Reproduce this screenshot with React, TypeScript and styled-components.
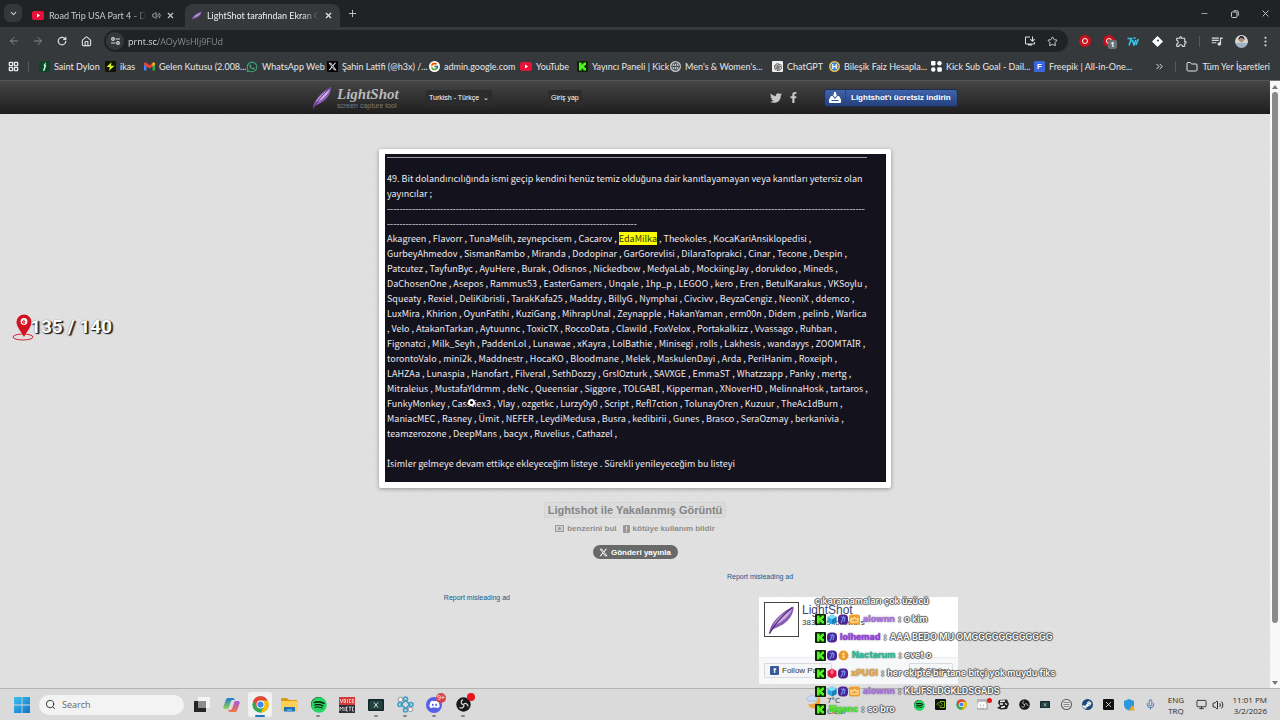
import React from "react";
import styled, { createGlobalStyle, css } from "styled-components";
import { FaDiscord, FaFacebookF, FaSpotify, FaSteamSymbol, FaTwitter, FaWhatsapp } from "react-icons/fa";
import { FaXTwitter } from "react-icons/fa6";
import { FcGoogle } from "react-icons/fc";
import { AiOutlineOpenAI } from "react-icons/ai";
import { MdOutlineExtension, MdOutlineInstallDesktop, MdQueueMusic } from "react-icons/md";
import {
  AlignJustify, ArrowLeft, ArrowRight, ChevronDown, ChevronsRight, Folder, Globe, House, LayoutGrid,
  Mic, Minus, Monitor, MoreVertical, Plus, RotateCw, Search, Share2, Star, Volume2, X,
} from "lucide-react";

const ui = `"Open Sans", "Noto Sans", sans-serif`;
const chrome = `Lato, "Noto Sans", sans-serif`;
const arial = `"Liberation Sans", Arial, sans-serif`;

const GlobalStyle = createGlobalStyle`
  * { box-sizing: border-box; }
  body { margin: 0; font-family: ${ui}; font-size: 8px; background: #e1e1e1; }
  button, input { font: inherit; color: inherit; border: 0; padding: 0; background: none; outline: none; }
  a { color: inherit; text-decoration: none; }
  p, h1 { margin: 0; }
  svg { display: block; flex: none; }
`;

const Desktop = styled.div`
  position: relative;
  display: flex;
  flex-direction: column;
  min-height: 100vh;
`;

/* ---------- browser chrome ---------- */

const TabStrip = styled.div`
  display: flex;
  align-items: flex-end;
  height: 27px;
  background: #202224;
  color: #c7cacd;
  font-family: ${chrome};
  font-size: 9px;
`;

const TabSearch = styled.button`
  display: grid;
  place-items: center;
  width: 18px;
  height: 18px;
  margin: 0 4px 5px;
  border-radius: 6px;
  background: #35383a;
`;

const Tab = styled.div<{ $active?: boolean }>`
  display: flex;
  align-items: center;
  gap: 5px;
  width: 159px;
  height: 23px;
  padding: 0 10px 0 6px;
  border-radius: 8px 8px 0 0;
  ${(p) => p.$active && css`
    width: 155px;
    padding-right: 7px;
    background: #36393b;
    color: #eceef0;
  `}
`;

const TabTitle = styled.span`
  flex: 1;
  min-width: 0;
  overflow: hidden;
  white-space: nowrap;
  mask-image: linear-gradient(90deg, #000 85%, transparent);
`;

const IconButton = styled.button<{ $w?: number }>`
  display: grid;
  place-items: center;
  flex: none;
  width: ${(p) => p.$w ?? 24}px;
  height: 100%;
`;

const NewTab = styled(IconButton)`
  height: 27px;
`;

const WindowButtons = styled.div`
  display: flex;
  height: 27px;
  margin-left: auto;
`;

const Toolbar = styled.div`
  display: flex;
  align-items: center;
  height: 28px;
  padding: 0 3px 0 2px;
  background: #36393b;
  color: #d9dcdf;
`;

const Omnibox = styled.div`
  display: flex;
  align-items: center;
  flex: 1;
  height: 22px;
  margin: 0 5px 0 6px;
  padding: 0 5px 0 2px;
  border-radius: 11px;
  background: #202224;
`;

const SiteInfo = styled.button`
  display: grid;
  place-items: center;
  width: 18px;
  height: 18px;
  border-radius: 9px;
  background: #35383a;
`;

const Address = styled.input`
  flex: 1;
  min-width: 0;
  height: 18px;
  margin-left: 4px;
  font-size: 9px;
  color: transparent;
  background: linear-gradient(90deg, #eceef0 30px, #8c9094 30px);
  background-clip: text;
`;

const Divider = styled.span`
  width: 1px;
  height: 11px;
  background: #56595c;
`;

const Avatar = styled.span`
  display: block;
  width: 13px;
  height: 13px;
  border-radius: 7px;
  background: radial-gradient(circle at 50% 40%, #b98b76 0 22%, transparent 24%),
    radial-gradient(circle at 50% 30%, #2c2f3d 0 26%, transparent 28%),
    linear-gradient(#d4d6d4 60%, #9fb2c4 60%);
`;

const BlockerIcon = styled.span<{ $badge?: string }>`
  position: relative;
  display: block;
  width: 12px;
  height: 12px;
  border-radius: 6px;
  background: #c9101c;
  &::before {
    content: "";
    position: absolute;
    inset: 3px;
    border: 1px solid #fff;
    border-radius: 3px;
  }
  ${(p) => p.$badge && css`
    &::after {
      content: "${p.$badge}";
      position: absolute;
      left: 5px;
      top: 5px;
      width: 9px;
      height: 9px;
      border-radius: 2px;
      background: #6d7073;
      color: #fff;
      font: bold 7px/9px ${ui};
      text-align: center;
    }
  `}
`;

const BookmarkBar = styled.nav`
  display: flex;
  align-items: center;
  height: 25px;
  padding: 0 10px 2px 8px;
  background: #36393b;
  color: #e6e8ea;
  font-family: ${chrome};
  font-size: 9px;
`;

const Bookmark = styled.a<{ $w?: number }>`
  display: flex;
  align-items: center;
  gap: 4px;
  flex: 0 0 ${(p) => (p.$w ? `${p.$w}px` : "auto")};
  min-width: 0;
  white-space: nowrap;
`;

const BookmarkTail = styled.div`
  display: flex;
  align-items: center;
  gap: 10px;
  margin-left: auto;
`;

const Tile = styled.span<{ $bg: string; $fg?: string; $round?: boolean; $size?: number }>`
  display: grid;
  place-items: center;
  flex: none;
  width: ${(p) => p.$size ?? 11}px;
  height: ${(p) => p.$size ?? 11}px;
  border-radius: ${(p) => (p.$round ? 50 : 10)}%;
  background: ${(p) => p.$bg};
  color: ${(p) => p.$fg ?? "#fff"};
  font: bold 8px/10px ${arial};
`;

/* ---------- page ---------- */

const Viewport = styled.div`
  display: flex;
  flex: 1;
`;

const Page = styled.div`
  flex: 1;
  min-width: 0;
  font-family: ${arial};
  background-color: #e5e5e5;
  background-image:
    conic-gradient(rgba(0, 0, 0, 0.03) 25%, transparent 0 50%, rgba(0, 0, 0, 0.03) 0 75%, transparent 0),
    repeating-linear-gradient(45deg, rgba(0, 0, 0, 0.02) 0 1px, transparent 1px 3px);
  background-size: 2px 2px, auto;
`;

const SiteHeader = styled.header`
  height: 34px;
  border-top: 1px solid #555;
  background: linear-gradient(#454545, #1e1e1e);
`;

const HeaderInner = styled.div`
  display: flex;
  align-items: center;
  max-width: 646px;
  height: 100%;
  margin: 0 auto;
  color: #fff;
`;

const Logo = styled.a`
  display: flex;
  gap: 5px;
  width: 114px;
`;

const LogoText = styled.span`
  display: flex;
  flex-direction: column;
  color: #b9b9b9;
  font: italic bold 15px/16px "Liberation Serif", serif;
`;

const LogoTag = styled.span`
  color: #7c7c7c;
  font: 7px/8px ${arial};
  white-space: nowrap;
`;

const HeaderButton = styled.button`
  height: 15px;
  padding: 0 3px;
  border-radius: 2px;
  background: #2c2c2c;
  font-size: 7px;
  white-space: nowrap;
`;

const LoginButton = styled(HeaderButton)`
  margin-left: 56px;
`;

const Social = styled.div`
  display: flex;
  align-items: center;
  gap: 6px;
  margin-left: auto;
  color: #c8c8c8;
`;

const Download = styled.a`
  display: flex;
  align-items: center;
  width: 134px;
  height: 18px;
  margin-left: 25px;
  border: 1px solid #1d2c50;
  border-radius: 3px;
  background: linear-gradient(#3f64ac, #25407c);
  font-weight: bold;
  font-size: 8px;
  white-space: nowrap;
`;

const DownloadIcon = styled.span`
  display: grid;
  place-items: center;
  width: 21px;
  height: 100%;
  margin-right: 5px;
  border-right: 1px solid #2c4884;
`;

const Main = styled.main`
  display: flex;
  flex-direction: column;
  align-items: center;
  padding-top: 35px;
`;

const Card = styled.div`
  width: 512px;
  max-width: 100%;
  padding: 5px 5px 6px 6px;
  border-radius: 2px;
  background: #fff;
  box-shadow: 0 1px 4px rgba(0, 0, 0, 0.35);
`;

const Shot = styled.article`
  padding: 3px 19px 11px 2px;
  background: #14121c;
  color: #eceaf0;
  font: 9px/15px "Noto Sans CJK JP", sans-serif;
`;

const Rule = styled.hr`
  height: 1px;
  margin: 0 0 13px;
  border: 0;
  background: #9a99a2;
`;

const Line = styled.p`
  height: 15px;
  white-space: nowrap;
`;

const DottedI = styled.span`
  font-family: "Noto Sans", sans-serif;
`;

const Mark = styled.mark`
  background: #fbff00;
  color: #33330c;
`;

const Title = styled.h1`
  margin-top: 14px;
  padding: 0 3px;
  border: 1px solid #d4d4d4;
  background: rgba(215, 215, 215, 0.6);
  color: #858585;
  font-size: 11px;
  line-height: 14px;
`;

const Actions = styled.div`
  display: flex;
  gap: 6px;
  margin-top: 5px;
  color: #8d8d8d;
  font-weight: bold;
  font-size: 8px;
  line-height: 11px;
`;

const Action = styled.a`
  display: flex;
  align-items: center;
  gap: 3px;
`;

const PostButton = styled.button`
  display: flex;
  align-items: center;
  justify-content: center;
  gap: 3px;
  width: 85px;
  height: 14px;
  margin-top: 11px;
  border-radius: 7px;
  background: #696969;
  color: #fff;
  font-weight: bold;
  font-size: 8px;
`;

const Ads = styled.div`
  display: flex;
  justify-content: space-between;
  width: 646px;
  max-width: 100%;
  padding: 13px 0 4px;
`;

const AdColumn = styled.div<{ $left?: boolean }>`
  display: flex;
  flex-direction: column;
  width: ${(p) => (p.$left ? 198 : 231)}px;
  padding-top: ${(p) => (p.$left ? 21 : 0)}px;
  align-items: ${(p) => (p.$left ? "flex-end" : "flex-start")};
`;

const ReportLink = styled.a`
  color: #14588f;
  font-size: 7px;
  line-height: 10px;
`;

const Followers = styled.section`
  display: flex;
  flex-direction: column;
  align-self: flex-end;
  width: 199px;
  height: 87px;
  margin-top: 15px;
  background: #fff;
`;

const FollowersTop = styled.div`
  display: flex;
  flex: 1;
  gap: 3px;
  padding: 5px;
`;

const Thumb = styled.span`
  display: grid;
  place-items: center;
  width: 35px;
  height: 35px;
  border: 1px solid #444;
`;

const PageName = styled.a`
  display: block;
  color: #3b4476;
  font-size: 12px;
  line-height: 16px;
`;

const Count = styled.span`
  color: #333;
  font-size: 8px;
  line-height: 10px;
`;

const FollowersBar = styled.div`
  display: flex;
  justify-content: space-between;
  padding: 5px 5px 6px;
  border-top: 1px solid #ececec;
  background: #f7f8f9;
`;

const SmallButton = styled.button`
  display: flex;
  align-items: center;
  gap: 3px;
  height: 15px;
  padding: 0 5px;
  border: 1px solid #d9dbdf;
  border-radius: 1px;
  background: #f5f6f7;
  color: #33363c;
  font-size: 8px;
  white-space: nowrap;
`;

const Scrollbar = styled.div`
  display: flex;
  flex-direction: column;
  align-items: center;
  width: 10px;
  padding: 4px 0 3px;
  border-top: 1px solid #777;
  background: #f8f8f8;
`;

const ScrollThumb = styled.span`
  flex: 530;
  width: 6px;
  margin-top: 3px;
  border-radius: 3px;
  background: #8a8a8a;
`;

const ScrollRest = styled.span`
  flex: 58;
`;

/* ---------- taskbar ---------- */

const Taskbar = styled.footer`
  display: flex;
  align-items: center;
  height: 32px;
  padding: 0 13px 0 14px;
  border-top: 1px solid #b4b4b4;
  background: #dadada;
  color: #2b2b2b;
`;

const SearchBox = styled.label`
  display: flex;
  align-items: center;
  gap: 6px;
  width: 145px;
  height: 20px;
  margin: 0 6px 0 9px;
  padding: 0 6px;
  border-radius: 10px;
  background: #f3f3f3;
`;

const SearchInput = styled.input`
  flex: 1;
  min-width: 0;
  font-size: 9px;
  &::placeholder { color: #666; opacity: 1; }
`;

const AppList = styled.div`
  display: flex;
  gap: 5px;
`;

const AppButton = styled.button<{ $active?: boolean; $running?: boolean }>`
  position: relative;
  display: grid;
  place-items: center;
  width: 24px;
  height: 25px;
  border-radius: 3px;
  background: ${(p) => (p.$active ? "#f1f1f1" : "transparent")};
  &::after {
    content: "";
    position: absolute;
    bottom: 0;
    width: ${(p) => (p.$active ? 10 : 4)}px;
    height: 2px;
    border-radius: 1px;
    background: ${(p) => (p.$active ? "#2376b7" : p.$running ? "#858585" : "transparent")};
  }
`;

const Badge = styled.span`
  position: absolute;
  right: 0;
  top: 1px;
  width: 10px;
  height: 10px;
  border-radius: 5px;
  background: #d8414a;
  color: #fff;
  font: 7px/10px ${ui};
`;

const Dot = styled.span<{ $s: number }>`
  position: absolute;
  right: 0;
  top: 1px;
  width: ${(p) => p.$s}px;
  height: ${(p) => p.$s}px;
  border-radius: 50%;
  background: #e8131b;
`;

const Tray = styled.div`
  display: flex;
  align-items: center;
  height: 100%;
  margin-left: auto;
`;

const Weather = styled.button`
  display: flex;
  gap: 3px;
  width: 103px;
  text-align: left;
  line-height: 11px;
`;

const TrayList = styled.div`
  display: flex;
  gap: 1px;
  margin-right: 7px;
`;

const TrayButton = styled.button`
  position: relative;
  display: grid;
  place-items: center;
  width: 20px;
  height: 16px;
`;

const Status = styled.div`
  display: flex;
  align-items: center;
  justify-content: flex-end;
  gap: 5px;
  width: 39px;
  margin-right: 8px;
`;

const Stack = styled.div<{ $right?: boolean; $w: number }>`
  width: ${(p) => p.$w}px;
  line-height: 11px;
  text-align: ${(p) => (p.$right ? "right" : "center")};
  white-space: nowrap;
`;

/* ---------- stream overlays ---------- */

const Counter = styled.div`
  position: absolute;
  left: 12px;
  top: 312px;
  display: flex;
  align-items: center;
  color: #fff;
  font: bold 19px/30px Roboto, sans-serif;
  white-space: nowrap;
  text-shadow: 1px 1px 1px #222, 2px 1px 1px #333, 0 0 1px #555;
`;

const CounterText = styled.span`
  margin-left: -6px;
`;

const Chat = styled.div`
  position: absolute;
  left: 815px;
  bottom: 2px;
  display: flex;
  flex-direction: column;
`;

const outline = "0 0 1px #444, 0 0 1px #444, 1px 0 1px #666, -1px 0 1px #666, 0 1px 1px #666, 0 -1px 1px #666";

const ChatRow = styled.p`
  display: flex;
  align-items: center;
  gap: 1px;
  height: 18px;
  color: #fff;
  font: 600 9px/18px Inter, sans-serif;
  text-shadow: ${outline};
  white-space: pre;
`;

const Nick = styled.span<{ $c: string }>`
  margin-left: 2px;
  color: ${(p) => p.$c};
  font-weight: 700;
  text-shadow: 0 0 1px ${(p) => p.$c}, 0 0 2px #777;
`;

const Cursor = styled.span`
  position: absolute;
  left: 468px;
  top: 399px;
  width: 7px;
  height: 7px;
  border: 2px solid #fff;
  border-radius: 4px;
  background: #000;
`;

/* ---------- drawings ---------- */

const Feather = ({ w, h }: { w: number; h: number }) => (
  <svg width={w} height={h} viewBox="0 0 20 24" preserveAspectRatio="none">
    <path d="M1 23C1 18 4 13 8 9c4-4 7-6 11-8 0 5-2 9-5 12-4 4-8 5-11 7z" fill="#8a5cb4" />
    <path d="M4 17c2-6 7-10 14-14-2 5-5 8-9 11-2 1-4 2-5 3z" fill="#cdaee4" />
    <path d="M1 23C5 15 11 8 18 2" stroke="#55307c" strokeWidth="1" fill="none" />
  </svg>
);

const YouTubeIcon = () => (
  <svg width="12" height="9" viewBox="0 0 12 9">
    <rect width="12" height="9" rx="2.5" fill="#e6123a" />
    <path d="M5 2.6v3.8L8 4.5z" fill="#fff" />
  </svg>
);

const TuneIcon = () => (
  <svg width="9" height="8" viewBox="0 0 9 8" fill="none" stroke="currentColor" strokeWidth="1.200">
    <circle cx="2" cy="2" r="1.300" /><path d="M4.500 2H9M0 6h4.500" /><circle cx="7" cy="6" r="1.300" />
  </svg>
);

const KickIcon = () => (
  <svg width="11" height="11" viewBox="0 0 11 11">
    <rect width="11" height="11" rx="1" fill="#0d2409" />
    <path d="M2 1.500h2.600v2h1v-1h1v-1H9v2.600H8v1H7v.8h1v1h1v2.600H6.600v-1h-1v-1h-1v2H2z" fill="#4df51c" />
  </svg>
);

const GmailIcon = () => (
  <svg width="11" height="9" viewBox="0 0 11 9">
    <path d="M0 1v7.500h2.500V3z" fill="#4285f4" />
    <path d="M11 1v7.500H8.500V3z" fill="#34a853" />
    <path d="M0 1.200l1.500-.9 4 3 4-3 1.500.9v1.600L5.500 6.500 0 2.800z" fill="#ea4335" />
    <path d="M8.500 1.100l1-.8 1.500.9v1.600L8.500 4.500z" fill="#fbbc04" />
  </svg>
);

const LeafIcon = () => (
  <svg width="11" height="11" viewBox="0 0 11 11">
    <rect width="11" height="11" rx="1" fill="#0e4526" />
    <path d="M7 1L4.500 4l.8 1L4 10h1.300l2-5.500L6.400 4z" fill="#d5f2dd" />
  </svg>
);

const IkasIcon = () => (
  <svg width="11" height="11" viewBox="0 0 11 11">
    <rect width="11" height="11" rx="1" fill="#101408" />
    <path d="M6.500 1.200L1.500 6h3.200l-.6 3.800L9.500 4.800H6z" fill="#d8f52a" />
  </svg>
);

const DotsIcon = () => (
  <svg width="11" height="11" viewBox="0 0 11 11" fill="#fff">
    <rect width="4.500" height="4.500" rx="1" /><circle cx="8.500" cy="2.300" r="2.200" />
    <circle cx="2.300" cy="8.500" r="2.200" /><rect x="6.300" y="6.300" width="4.500" height="4.500" rx="1" />
  </svg>
);

const SevenTvIcon = () => (
  <svg width="12" height="9" viewBox="0 0 12 9" fill="none" stroke="#35bfe8" strokeWidth="1.700">
    <path d="M.5 1.500h4L2 8.500M5.300 3l1.700 5 1.800-5M6.500 1.200h2M9 8l2.300-6" />
  </svg>
);

const ChromeIcon = ({ s }: { s: number }) => (
  <svg width={s} height={s} viewBox="0 0 24 24">
    <circle cx="12" cy="12" r="11.500" fill="#34a853" />
    <path d="M2 6.200A11.500 11.500 0 0 1 22 6.200H12L7 15z" fill="#ea4335" />
    <path d="M22 6.200A11.500 11.500 0 0 1 12 23.500L17 15 12 6.200z" fill="#fbbc04" />
    <circle cx="12" cy="12" r="5.600" fill="#fff" /><circle cx="12" cy="12" r="4.400" fill="#4285f4" />
  </svg>
);

const WindowsIcon = () => (
  <svg width="16" height="16" viewBox="0 0 16 16">
    <defs><linearGradient id="win" x2="1" y2="1"><stop stopColor="#3cc0ee" /><stop offset="1" stopColor="#1274c8" /></linearGradient></defs>
    <path d="M0 0h7.600v7.600H0zM8.400 0H16v7.600H8.400zM0 8.400h7.600V16H0zM8.400 8.400H16V16H8.400z" fill="url(#win)" />
  </svg>
);

const TaskViewIcon = () => (
  <svg width="16" height="15" viewBox="0 0 16 15">
    <rect x="4" width="12" height="11" fill="#f4f4f4" /><path d="M0 4h4v7h8v4H0z" fill="#252525" />
    <rect x="4" y="4" width="8" height="7" fill="#8d8d8d" />
  </svg>
);

const CopilotIcon = () => (
  <svg width="17" height="16" viewBox="0 0 17 16">
    <defs>
      <linearGradient id="cpa" y2="1" x2="0"><stop stopColor="#1e7ad6" /><stop offset="1" stopColor="#9bd34c" /></linearGradient>
      <linearGradient id="cpb" y2="1" x2="0"><stop stopColor="#a657e8" /><stop offset="1" stopColor="#f4743a" /></linearGradient>
    </defs>
    <path d="M5 1h5c1 0 1.500 1 2 2H9.500c-1 0-1.500 1-2 2.500L6 10c-.5 1.500-1 2-2 2H2c-1.500 0-2-1-1.500-2.500l2-6C3 2 3.500 1 5 1z" fill="url(#cpa)" />
    <path d="M12 15H7c-1 0-1.500-1-2-2h2.500c1 0 1.500-1 2-2.500L11 6c.5-1.500 1-2 2-2h2c1.500 0 2 1 1.500 2.500l-2 6C14 14 13.500 15 12 15z" fill="url(#cpb)" />
  </svg>
);

const ExplorerIcon = () => (
  <svg width="17" height="15" viewBox="0 0 17 15">
    <path d="M0 2a1 1 0 0 1 1-1h5l2 2h8v3H0z" fill="#d79a1a" /><rect y="4" width="17" height="10" rx="1" fill="#fbd053" />
    <path d="M3 10h11v4.500H3z" fill="#2170b8" /><path d="M6 12h5v2.500H6z" fill="#4fa3e0" />
  </svg>
);

const MonitorAppIcon = ({ s }: { s: number }) => (
  <svg width={s} height={s * 0.75} viewBox="0 0 16 12">
    <rect width="16" height="12" rx="1" fill="#15262a" /><rect x="1.500" y="1.500" width="13" height="9" fill="#21423f" />
    <path d="M6 3.500l4 5M10 3.500l-4 5" stroke="#d5e2e0" strokeWidth="1" />
  </svg>
);

const FlowerIcon = () => (
  <svg width="17" height="17" viewBox="0 0 17 17" fill="none" stroke="#3b9fc9" strokeWidth="1.600">
    <rect x="5.500" y="5.500" width="6" height="6" transform="rotate(45 8.500 8.500)" />
    <circle cx="8.500" cy="3" r="2" /><circle cx="8.500" cy="14" r="2" /><circle cx="14" cy="8.500" r="2" /><circle cx="3" cy="8.500" r="2" />
    <circle cx="3.500" cy="3.500" r="2.200" stroke="#8f8f8f" strokeWidth="1" fill="#fff" /><circle cx="13.500" cy="13.500" r="2.200" stroke="#8f8f8f" strokeWidth="1" fill="#fff" />
  </svg>
);

const ObsIcon = ({ s }: { s: number }) => (
  <svg width={s} height={s} viewBox="0 0 16 16">
    <circle cx="8" cy="8" r="7.700" fill="#181818" />
    <g fill="none" stroke="#d6d6d6" strokeWidth="1.300">
      <path d="M8 8C5 8 4.500 4 7.500 2.800" /><path d="M8 8c1.500-2.600 5-.6 4.800 2.200" /><path d="M8 8c1.500 2.600-2 4.800-4.300 3.200" />
    </g>
  </svg>
);

const VoiceIcon = () => (
  <svg width="16" height="16" viewBox="0 0 16 16">
    <rect width="16" height="16" fill="#26313a" /><rect width="16" height="8" fill="#d63a36" />
    <path d="M1 2l1.500 4L4 2M5 2.500h1.500v3H5zM8.500 2v4M12 2.500h-1.500v3H12M15 2.300h-1.700v3.500H15M13.500 4H15M1 14v-4l1.500 2L4 10v4M6 10v4M9 10H7.500v4H9M11 10v4M10 10h2.500M15 10h-1.500v4H15" fill="none" stroke="#f2dede" strokeWidth=".8" />
  </svg>
);

const MoonIcon = () => (
  <svg width="18" height="16" viewBox="0 0 18 16">
    <path d="M12 2c4 3 3 10-2 12-4 1.500-7-1-8-4 6 1 11-2 10-8z" fill="#f0a63a" />
    <path d="M2 7a2.500 2.500 0 0 1 1-4.500A3.500 3.500 0 0 1 9 3a2 2 0 0 1 0 4z" fill="#c8dbf2" stroke="#8fb2dc" strokeWidth=".6" />
  </svg>
);

const PinIcon = () => (
  <svg width="24" height="28" viewBox="0 0 24 28">
    <ellipse cx="11" cy="24" rx="10" ry="3" fill="none" stroke="#d22a35" strokeWidth="1" />
    <path d="M12 24C9 18 4.500 14 4.500 9a7.500 7.500 0 0 1 15 0c0 5-4.500 9-7.500 15z" fill="#d3111f" />
    <circle cx="12" cy="8.500" r="3.400" fill="#fff" /><path d="M10.500 9h2.500c0-2-2.500-2-2.500 0s1.500 2 2.500 1.200" stroke="#d3111f" fill="none" />
  </svg>
);

const Gem = () => (
  <svg width="10" height="11" viewBox="0 0 10 11">
    <path d="M5 .5l4.500 2.500v5L5 10.500.5 8V3z" fill="#2aa8dc" /><path d="M5 .5l4.500 2.500L5 5.500.5 3z" fill="#7fdcf7" /><path d="M5 5.500V10.500L9.500 8V3z" fill="#1681b8" />
  </svg>
);
const RedGem = () => (
  <svg width="10" height="11" viewBox="0 0 10 11">
    <path d="M5 .5l4.500 2.500v5L5 10.500.5 8V3z" fill="#e0183f" /><path d="M5 .5L7 4 5 7 3 4z" fill="#ff6a86" />
  </svg>
);
const Sub = () => (
  <svg width="10" height="11" viewBox="0 0 10 11">
    <rect y=".5" width="10" height="10" rx="4" fill="#4a2391" /><path d="M6 2L3 9M3 3l4 1-1 4" stroke="#6d90ee" strokeWidth="1.200" fill="none" />
  </svg>
);
const Crown = () => (
  <svg width="11" height="11" viewBox="0 0 11 11">
    <rect y=".5" width="11" height="10" rx="2" fill="#eda02c" /><path d="M2 8V4l2 1.500L5.500 3 7 5.500 9 4v4z" fill="none" stroke="#fff3cc" strokeWidth="1" />
  </svg>
);
const Coin = () => (
  <svg width="11" height="11" viewBox="0 0 11 11">
    <circle cx="5.500" cy="5.500" r="5" fill="#e8992a" /><path d="M5.500 2.500v6M4 4h3M4 7h3" stroke="#fbe2a4" />
  </svg>
);

/* ---------- data ---------- */

const bookmarks: { icon: React.ReactNode; label: string; w: number }[] = [
  { icon: <LeafIcon />, label: "Saint Dylon", w: 66 },
  { icon: <IkasIcon />, label: "ikas", w: 39 },
  { icon: <GmailIcon />, label: "Gelen Kutusu (2.008...", w: 102 },
  { icon: <FaWhatsapp size={12} color="#36b884" />, label: "WhatsApp Web", w: 81 },
  { icon: <Tile $bg="#000"><FaXTwitter size={9} /></Tile>, label: "Şahin Latifi (@h3x) /...", w: 102 },
  { icon: <Tile $bg="#fff" $round><FcGoogle size={9} /></Tile>, label: "admin.google.com", w: 91 },
  { icon: <YouTubeIcon />, label: "YouTube", w: 57 },
  { icon: <KickIcon />, label: "Yayıncı Paneli | Kick", w: 93 },
  { icon: <Tile $bg="#c3c6c8" $fg="#303335" $round><Globe size={9} /></Tile>, label: "Men's & Women's...", w: 102 },
  { icon: <Tile $bg="#eee" $fg="#333"><AiOutlineOpenAI size={10} /></Tile>, label: "ChatGPT", w: 57 },
  { icon: <Tile $bg="radial-gradient(circle, #3c7ed2 50%, #e0bd57 54%)" $round>H</Tile>, label: "Bileşik Faiz Hesapla...", w: 102 },
  { icon: <DotsIcon />, label: "Kick Sub Goal - Dail...", w: 103 },
  { icon: <Tile $bg="#3a66dc">F</Tile>, label: "Freepik | All-in-One...", w: 102 },
];

const lines: React.ReactNode[] = [
  "49. Bit dolandırıcılığında ismi geçip kendini henüz temiz olduğuna dair kanıtlayamayan veya kanıtları yetersiz olan",
  "yayıncılar ;",
  "-".repeat(153),
  "-".repeat(80),
  <>Akagreen , Flavorr , TunaMelih, zeynepcisem , Cacarov , <Mark>EdaMilka</Mark> , Theokoles , KocaKariAnsiklopedisi ,</>,
  "GurbeyAhmedov , SismanRambo , Miranda , Dodopinar , GarGorevlisi , DilaraToprakci , Cinar , Tecone , Despin ,",
  "Patcutez , TayfunByc , AyuHere , Burak , Odisnos , Nickedbow , MedyaLab , MockiingJay , dorukdoo , Mineds ,",
  "DaChosenOne , Asepos , Rammus53 , EasterGamers , Unqale , 1hp_p , LEGOO , kero , Eren , BetulKarakus , VKSoylu ,",
  "Squeaty , Rexiel , DeliKibrisli , TarakKafa25 , Maddzy , BillyG , Nymphai , Civcivv , BeyzaCengiz , NeoniX , ddemco ,",
  "LuxMira , Khirion , OyunFatihi , KuziGang , MihrapUnal , Zeynapple , HakanYaman , erm00n , Didem , pelinb , Warlica",
  ", Velo , AtakanTarkan , Aytuunnc , ToxicTX , RoccoData , Clawild , FoxVelox , Portakalkizz , Vvassago , Ruhban ,",
  <>Figonatci , Milk_Seyh , PaddenLol , Lunawae , xKayra , LolBathie , Minisegi , rolls , Lakhesis , wandayys , ZOOMTA<DottedI>İ</DottedI>R ,</>,
  "torontoValo , mini2k , Maddnestr , HocaKO , Bloodmane , Melek , MaskulenDayi , Arda , PeriHanim , Roxeiph ,",
  "LAHZAa , Lunaspia , Hanofart , Filveral , SethDozzy , GrslOzturk , SAVXGE , EmmaST , Whatzzapp , Panky , mertg ,",
  <>Mitraleius , MustafaYldrmm , deNc , Queensiar , Siggore , TOLGAB<DottedI>İ</DottedI> , Kipperman , XNoverHD , MelinnaHosk , tartaros ,</>,
  "FunkyMonkey , Casstiex3 , Vlay , ozgetkc , Lurzy0y0 , Script , Refl7ction , TolunayOren , Kuzuur , TheAc1dBurn ,",
  "ManiacMEC , Rasney , Ümit , NEFER , LeydiMedusa , Busra , kedibirii , Gunes , Brasco , SeraOzmay , berkanivia ,",
  "teamzerozone , DeepMans , bacyx , Ruvelius , Cathazel ,",
  "",
  <><DottedI>İ</DottedI>simler gelmeye devam ettikçe ekleyeceğim listeye . Sürekli yenileyeceğim bu listeyi</>,
];

const chat: { badges: React.ReactNode[]; nick?: string; color?: string; text: string }[] = [
  { badges: [], text: "çıkaramamaları çok üzücü" },
  { badges: [<KickIcon />, <Gem />, <Sub />, <Crown />], nick: "alownn", color: "#a874d6", text: "o kim" },
  { badges: [<KickIcon />, <Sub />], nick: "lolhemad", color: "#9440d8", text: "AAA BEDO MU OMGGGGGGGGGGGG" },
  { badges: [<KickIcon />, <Sub />, <Coin />], nick: "Nactarum", color: "#2fb795", text: "evet o" },
  { badges: [<KickIcon />, <RedGem />, <Sub />], nick: "xPUGI", color: "#dfa34e", text: "her ekipte bir tane bitçi yok muydu fiks" },
  { badges: [<KickIcon />, <Gem />, <Sub />, <Crown />], nick: "alownn", color: "#a874d6", text: "KLJFSLDGKLDSGADS" },
  { badges: [<KickIcon />], nick: "lilgenc", color: "#45e02e", text: "so bro" },
];

export default function App() {
  return (
    <Desktop>
      <GlobalStyle />
      <TabStrip>
        <TabSearch aria-label="Search tabs"><ChevronDown size={9} strokeWidth={3} /></TabSearch>
        <Tab>
          <YouTubeIcon />
          <TabTitle>Road Trip USA Part 4 - Drivi</TabTitle>
          <Volume2 size={9} />
          <IconButton $w={9} aria-label="Close tab"><X size={9} strokeWidth={3} /></IconButton>
        </Tab>
        <Tab $active>
          <Feather w={11} h={10} />
          <TabTitle>LightShot tarafından Ekran Gör</TabTitle>
          <IconButton $w={9} aria-label="Close tab"><X size={9} strokeWidth={3} /></IconButton>
        </Tab>
        <NewTab aria-label="New tab"><Plus size={11} /></NewTab>
        <WindowButtons>
          <IconButton $w={30} aria-label="Minimize"><Minus size={9} /></IconButton>
          <IconButton $w={31} aria-label="Restore">
            <svg width="8" height="8" viewBox="0 0 8 8" fill="none" stroke="currentColor">
              <rect x=".5" y="2" width="5.500" height="5.500" rx="1" /><path d="M2.500.8H6a1.300 1.300 0 0 1 1.300 1.300v3.500" />
            </svg>
          </IconButton>
          <IconButton $w={30} aria-label="Close"><X size={11} /></IconButton>
        </WindowButtons>
      </TabStrip>

      <Toolbar>
        <IconButton aria-label="Back"><ArrowLeft size={12} color="#85888b" /></IconButton>
        <IconButton aria-label="Forward"><ArrowRight size={12} color="#85888b" /></IconButton>
        <IconButton aria-label="Reload"><RotateCw size={10} strokeWidth={3} /></IconButton>
        <IconButton aria-label="Home"><House size={11} strokeWidth={2.5} /></IconButton>
        <Omnibox>
          <SiteInfo aria-label="Site information"><TuneIcon /></SiteInfo>
          <Address aria-label="Address" defaultValue="prnt.sc/AOyWsHlj9FUd" />
          <IconButton $w={22} aria-label="Install"><MdOutlineInstallDesktop size={12} /></IconButton>
          <IconButton $w={22} aria-label="Bookmark"><Star size={11} /></IconButton>
        </Omnibox>
        <IconButton aria-label="Blocker"><BlockerIcon /></IconButton>
        <IconButton aria-label="Ad blocker"><BlockerIcon $badge="1" /></IconButton>
        <IconButton aria-label="7TV"><SevenTvIcon /></IconButton>
        <IconButton aria-label="Extension">
          <svg width="11" height="11" viewBox="0 0 11 11"><path d="M5.500 0L11 5.500 5.500 11 0 5.500z" fill="#fff" /><circle cx="6" cy="4.500" r="1" fill="#36393b" /></svg>
        </IconButton>
        <IconButton aria-label="Extensions"><MdOutlineExtension size={13} /></IconButton>
        <IconButton as="span" $w={12}><Divider /></IconButton>
        <IconButton aria-label="Media"><MdQueueMusic size={14} /></IconButton>
        <IconButton aria-label="Profile"><Avatar /></IconButton>
        <IconButton aria-label="Menu"><MoreVertical size={13} /></IconButton>
      </Toolbar>

      <BookmarkBar>
        <Bookmark href="#" $w={20} aria-label="Apps"><LayoutGrid size={11} strokeWidth={3} /></Bookmark>
        <Bookmark as="span" $w={11}><Divider /></Bookmark>
        {bookmarks.map((b) => (
          <Bookmark key={b.label} href="#" $w={b.w}>{b.icon}{b.label}</Bookmark>
        ))}
        <BookmarkTail>
          <ChevronsRight size={11} />
          <Divider />
          <Bookmark href="#"><Folder size={12} />Tüm Yer İşaretleri</Bookmark>
        </BookmarkTail>
      </BookmarkBar>

      <Viewport>
        <Page>
          <SiteHeader>
            <HeaderInner>
              <Logo href="#">
                <Feather w={20} h={24} />
                <LogoText>LightShot<LogoTag>screen capture tool</LogoTag></LogoText>
              </Logo>
              <HeaderButton>Turkish - Türkçe &nbsp;⌄</HeaderButton>
              <LoginButton>Giriş yap</LoginButton>
              <Social>
                <a href="#" aria-label="Twitter"><FaTwitter size={12} /></a>
                <a href="#" aria-label="Facebook"><FaFacebookF size={11} /></a>
              </Social>
              <Download href="#">
                <DownloadIcon>
                  <svg width="12" height="11" viewBox="0 0 12 11">
                    <path d="M2 4h1.500L6 7l2.500-3H10l2 3.500V10a1 1 0 0 1-1 1H1a1 1 0 0 1-1-1V7.500z" fill="#fff" />
                    <path d="M5 0h2v2.500h1.500L6 5.500 3.500 2.500H5z" fill="#fff" />
                    <path d="M2.500 8.500h7" stroke="#33569b" />
                  </svg>
                </DownloadIcon>
                Lightshot'ı ücretsiz indirin
              </Download>
            </HeaderInner>
          </SiteHeader>

          <Main>
            <Card>
              <Shot>
                <Rule />
                {lines.map((line, i) => <Line key={i}>{line}</Line>)}
              </Shot>
            </Card>
            <Title>Lightshot ile Yakalanmış Görüntü</Title>
            <Actions>
              <Action href="#">
                <svg width="9" height="7" viewBox="0 0 9 7"><rect x=".5" y=".5" width="8" height="6" fill="#d0d0d0" stroke="#9a9a9a" /><circle cx="4.500" cy="3.500" r="1.500" fill="#9a9a9a" /></svg>
                benzerini bul
              </Action>
              <Action href="#">
                <svg width="7" height="8" viewBox="0 0 7 8"><rect width="7" height="8" rx="1" fill="#9a9a9a" /><path d="M3.500 1.500v3M3.500 5.500v1" stroke="#e8e8e8" /></svg>
                kötüye kullanım bildir
              </Action>
            </Actions>
            <PostButton><FaXTwitter size={9} />Gönderi yayınla</PostButton>
            <Ads>
              <AdColumn $left><ReportLink href="#">Report misleading ad</ReportLink></AdColumn>
              <AdColumn>
                <ReportLink href="#">Report misleading ad</ReportLink>
                <Followers>
                  <FollowersTop>
                    <Thumb><Feather w={27} h={30} /></Thumb>
                    <div><PageName href="#">LightShot</PageName><Count>383,569 followers</Count></div>
                  </FollowersTop>
                  <FollowersBar>
                    <SmallButton><Tile $bg="#3b5998" $size={9}>f</Tile>Follow Page</SmallButton>
                    <SmallButton><Share2 size={8} />Share</SmallButton>
                  </FollowersBar>
                </Followers>
              </AdColumn>
            </Ads>
          </Main>
        </Page>
        <Scrollbar>
          <svg width="6" height="4" viewBox="0 0 6 4"><path d="M3 0l3 4H0z" fill="#777" /></svg>
          <ScrollThumb />
          <ScrollRest />
          <svg width="6" height="4" viewBox="0 0 6 4"><path d="M3 4l3-4H0z" fill="#777" /></svg>
        </Scrollbar>
      </Viewport>

      <Taskbar>
        <button aria-label="Start"><WindowsIcon /></button>
        <SearchBox><Search size={11} /><SearchInput aria-label="Search" placeholder="Search" /></SearchBox>
        <AppList>
          <AppButton aria-label="Task view"><TaskViewIcon /></AppButton>
          <AppButton aria-label="Copilot"><CopilotIcon /></AppButton>
          <AppButton aria-label="Chrome" $active><ChromeIcon s={17} /></AppButton>
          <AppButton aria-label="Explorer"><ExplorerIcon /></AppButton>
          <AppButton aria-label="Spotify" $running><Tile $bg="#111" $round $size={15}><FaSpotify size={16} color="#22d760" /></Tile></AppButton>
          <AppButton aria-label="Voicemeeter"><VoiceIcon /></AppButton>
          <AppButton aria-label="Monitor" $running><MonitorAppIcon s={16} /></AppButton>
          <AppButton aria-label="Network" $running><FlowerIcon /></AppButton>
          <AppButton aria-label="Discord" $running><Tile $bg="#5661e8" $round $size={16}><FaDiscord size={11} /></Tile><Badge>9+</Badge></AppButton>
          <AppButton aria-label="OBS" $running><ObsIcon s={15} /><Dot $s={8} /></AppButton>
        </AppList>
        <Tray>
          <Weather><MoonIcon /><span>7°C<br />Clear</span></Weather>
          <TrayList>
            <TrayButton aria-label="Spotify"><Tile $bg="#111" $round $size={10}><FaSpotify size={11} color="#22d760" /></Tile></TrayButton>
            <TrayButton aria-label="Nvidia"><Tile $bg="#111"><svg width="9" height="7" viewBox="0 0 9 7" fill="none" stroke="#76b900"><path d="M.5 3.500C2 1 5 1 6.500 3.500 5 5.500 3 5.500 2 3.500M4 .5h4.500v6H4" /></svg></Tile></TrayButton>
            <TrayButton aria-label="Chrome"><ChromeIcon s={11} /></TrayButton>
            <TrayButton aria-label="Discord">
              <Tile $bg="#b5b5b5"><FaDiscord size={10} /></Tile><Dot $s={5} />
            </TrayButton>
            <TrayButton aria-label="Game"><svg width="12" height="11" viewBox="0 0 12 11"><path d="M2 1l8-.5L12 5l-2 5-6 .5L0 9l3-2-2-3z" fill="#222" /><path d="M3 2.500l5-.5M3 5h3M8 4.500l2 1M4 8.500l4-1" stroke="#fff" strokeWidth="1.300" /></svg></TrayButton>
            <TrayButton aria-label="OBS"><ObsIcon s={11} /></TrayButton>
            <TrayButton aria-label="Monitor"><MonitorAppIcon s={10} /></TrayButton>
            <TrayButton aria-label="Menu"><Tile $bg="#555" $round><Tile $bg="#e4e4e4" $fg="#444" $round $size={9}><AlignJustify size={7} /></Tile></Tile></TrayButton>
            <TrayButton aria-label="Steam"><Tile $bg="#1c4a7c" $round><FaSteamSymbol size={10} /></Tile></TrayButton>
            <TrayButton aria-label="X"><Tile $bg="#111"><X size={9} /></Tile></TrayButton>
            <TrayButton aria-label="Security"><svg width="11" height="12" viewBox="0 0 11 12"><path d="M5 0l5 2v4c0 3-2 4.500-5 5.500C2 10.500 0 9 0 6V2z" fill="#2b97dd" /><path d="M8 6l3 5.500H5z" fill="#f0a423" /></svg></TrayButton>
            <TrayButton aria-label="Microphone"><Mic size={11} color="#3d6ea8" /></TrayButton>
          </TrayList>
          <Stack $w={18}>ENG<br />TRQ</Stack>
          <Status><Monitor size={11} /><Volume2 size={12} /></Status>
          <Stack $w={35} $right>11:01 PM<br />3/2/2026</Stack>
        </Tray>
      </Taskbar>

      <Cursor />
      <Counter><PinIcon /><CounterText>135 / 140</CounterText></Counter>
      <Chat>
        {chat.map((m, i) => (
          <ChatRow key={i}>
            {m.badges.map((b, j) => <React.Fragment key={j}>{b}</React.Fragment>)}
            {m.nick && <><Nick $c={m.color!}>{m.nick}</Nick><span> : </span></>}
            <span>{m.text}</span>
          </ChatRow>
        ))}
      </Chat>
    </Desktop>
  );
}
